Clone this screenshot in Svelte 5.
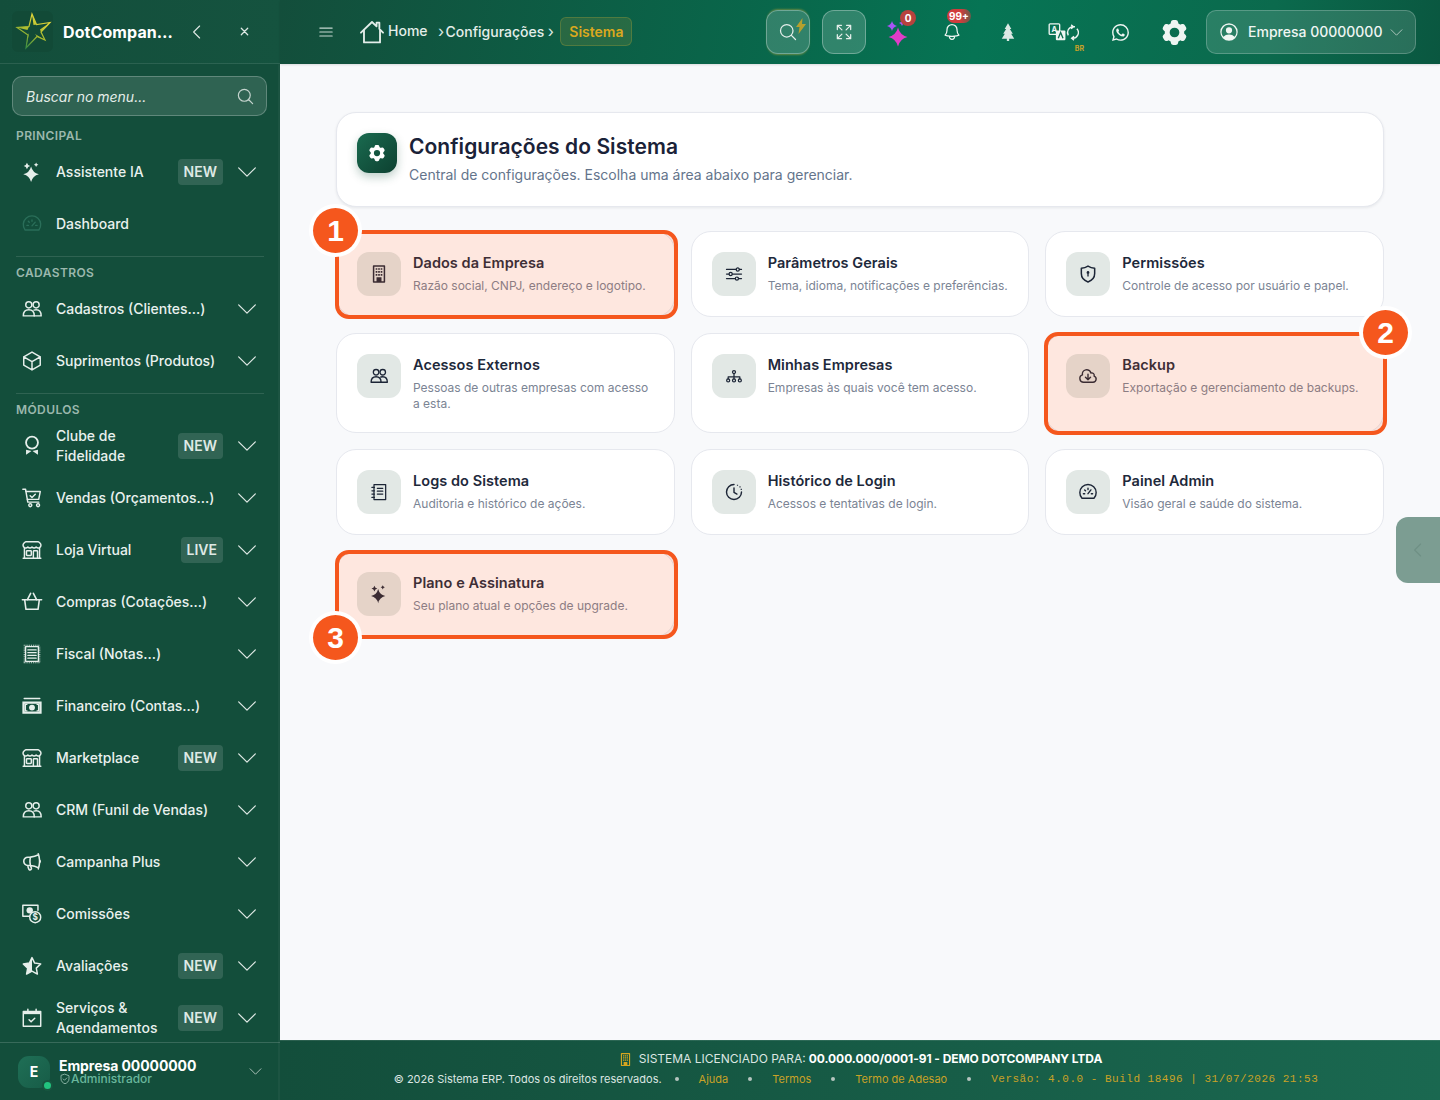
<script>
  const star = (x, y, r) => {
    const k = r * 0.2;
    return `M${x} ${y - r}Q${x + k} ${y - k} ${x + r} ${y}Q${x + k} ${y + k} ${x} ${y + r}Q${x - k} ${y + k} ${x - r} ${y}Q${x - k} ${y - k} ${x} ${y - r}Z`;
  };
  const dots = () => {
    let d = '';
    for (let x = 3; x <= 20; x += 2) d += `M${x} 2h1v1h-1zM${x} 21h1v1h-1z`;
    for (let y = 4; y <= 20; y += 2) d += `M3 ${y}h1v1h-1zM20 ${y}h1v1h-1z`;
    return d;
  };
  const usersS = ['M8.5 4.2a3.3 3.3 0 1 1 0 6.6a3.3 3.3 0 0 1 0-6.6z', 'M16.5 4.2a3.3 3.3 0 1 1 0 6.6a3.3 3.3 0 0 1 0-6.6z', 'M2.5 19.5c0-4.3 2.6-6.6 6-6.6s6 2.3 6 6.6z', 'M14.2 13.2c.7-.2 1.5-.3 2.3-.3c3.4 0 5.5 2.3 5.5 6.6h-7.6'];
  const store = ['M13.5 21v-7.5a.75.75 0 01.75-.75h3a.75.75 0 01.75.75V21m-4.5 0H2.36m11.14 0H18m0 0h3.64m-1.39 0V9.349m-16.5 11.65V9.35m0 0a3.001 3.001 0 003.75-.615A2.993 2.993 0 009.75 9.75c.896 0 1.7-.393 2.25-1.016a2.993 2.993 0 002.25 1.016c.896 0 1.7-.393 2.25-1.016a3.001 3.001 0 003.75.614m-16.5 0a3.004 3.004 0 01-.621-4.72L4.318 3.44A1.5 1.5 0 015.378 3h13.243a1.5 1.5 0 011.06.44l1.19 1.189a3 3 0 01-.621 4.72m-13.5 8.65h3.75a.75.75 0 00.75-.75V13.5a.75.75 0 00-.75-.75H6.75a.75.75 0 00-.75.75v3.75c0 .415.336.75.75.75z'];
  const cog = 'M11.078 2.25c-.917 0-1.699.663-1.85 1.567L9.05 4.889c-.02.12-.115.26-.297.348a7.493 7.493 0 00-.986.57c-.166.115-.334.126-.45.083L6.3 5.508a1.875 1.875 0 00-2.282.819l-.922 1.597a1.875 1.875 0 00.432 2.385l.84.692c.095.078.17.229.154.43a7.598 7.598 0 000 1.139c.015.2-.059.352-.153.43l-.841.692a1.875 1.875 0 00-.432 2.385l.922 1.597a1.875 1.875 0 002.282.818l1.019-.382c.115-.043.283-.031.45.082.312.214.641.405.985.57.182.088.277.228.297.35l.178 1.071c.151.904.933 1.567 1.85 1.567h1.844c.916 0 1.699-.663 1.85-1.567l.178-1.072c.02-.12.114-.26.297-.349.344-.165.673-.356.985-.57.167-.114.335-.125.45-.082l1.02.382a1.875 1.875 0 002.28-.819l.923-1.597a1.875 1.875 0 00-.432-2.385l-.84-.692c-.095-.078-.17-.229-.154-.43a7.614 7.614 0 000-1.139c-.016-.2.059-.352.153-.43l.84-.692c.708-.582.891-1.59.433-2.385l-.922-1.597a1.875 1.875 0 00-2.282-.818l-1.02.382c-.114.043-.282.031-.449-.083a7.49 7.49 0 00-.985-.57c-.183-.087-.277-.227-.297-.348l-.179-1.072a1.875 1.875 0 00-1.85-1.567h-1.843zM12 15.75a3.75 3.75 0 100-7.5 3.75 3.75 0 000 7.5z';
  const I = {
    sparkles: { f: [star(11, 14.5, 8.5), star(6.5, 5.5, 3.5), star(16.5, 4, 2.5)] },
    gauge: { s: ['M4.5 18.5a9.5 9.5 0 1 1 15 0z', 'M12 14l3.5-4', 'M6.5 13.5h1.5M16 13.5h1.5M8 9l1 1M12 7.5v1.5'] },
    users: { s: usersS, w: 1.6 },
    cube: { s: ['M21 7.5l-9-5.25L3 7.5m18 0l-9 5.25m9-5.25v9l-9 5.25M3 7.5l9 5.25M3 7.5v9l9 5.25m0-9v9'], w: 1.6 },
    award: { s: ['M12 1.8a6.5 6.5 0 1 1 0 13a6.5 6.5 0 0 1 0-13z'], f: ['M5.5 16L11.5 17.5L5.5 21.5zM18.5 16L12.5 17.5L18.5 21.5z'], w: 2 },
    cart: { s: ['M2 2.5h3l2.4 14h12', 'M5.5 5h15.5l-1.7 8.5H7', 'M8.5 19.8a1.6 1.6 0 1 1 0 .01zM17 19.8a1.6 1.6 0 1 1 0 .01z', 'M10 9.5l2 2l3.6-3.6'], w: 1.6 },
    store: { s: store, w: 1.6 },
    basket: { s: ['M1.5 9.5h21', 'M4 9.5l1.4 10.5h13.2L20 9.5', 'M7 9.5l3.5-7M17 9.5l-3.5-7'], w: 1.7 },
    receipt: { s: ['M5 4h14v16H5z', 'M7.5 7.5h9M7.5 10.5h9M7.5 13.5h9M7.5 16.5h9'], f: [dots()], w: 1.5 },
    cash: { s: ['M3.5 3.8h17'], f: ['M1.5 7h21v13.5h-21zM4 9.5v8.5h16V9.5z', 'M12 10.5a3.2 3.2 0 1 1 0 6.4a3.2 3.2 0 0 1 0-6.4z', 'M4 9.5h3v1.5H5.5v5.5H7V18H4zM20 9.5h-3v1.5h1.5v5.5H17V18h3z'], w: 1.6 },
    megaphone: { s: ['M10.34 15.84c-.688-.06-1.386-.09-2.09-.09H7.5a4.5 4.5 0 110-9h.75c.704 0 1.402-.03 2.09-.09m0 9.18c.253.962.584 1.892.985 2.783.247.55.06 1.21-.463 1.511l-.657.38c-.551.318-1.26.117-1.527-.461a20.845 20.845 0 01-1.44-4.282m3.102.069a18.03 18.03 0 01-.59-4.59c0-1.586.205-3.124.59-4.59m0 9.18a23.848 23.848 0 018.835 2.535M10.34 6.66a23.847 23.847 0 008.835-2.535m0 0A23.74 23.74 0 0018.795 3m.38 1.125a23.91 23.91 0 011.014 5.395m-1.014 8.855c-.118.38-.245.754-.38 1.125m.38-1.125a23.91 23.91 0 001.014-5.395m0-3.46c.495.413.811 1.035.811 1.73 0 .695-.316 1.317-.811 1.73m0-3.46a24.347 24.347 0 010 3.46'], w: 1.7 },
    comm: { s: ['M9 14.5H2v-12h16.5v5.5', 'M15.5 9.5a6 6 0 1 1 0 12a6 6 0 0 1 0-12z'], f: ['M9.5 4.5a3.5 3.5 0 1 1 0 7a3.5 3.5 0 0 1 0-7z'], t: '$', w: 1.6 },
    starhalf: { s: ['M12 2.8l2.9 6 6.6.9-4.8 4.6 1.2 6.5L12 17.7l-5.9 3.1 1.2-6.5-4.8-4.6 6.6-.9z'], f: ['M12 2.8v14.9l-5.9 3.1 1.2-6.5-4.8-4.6 6.6-.9z'], w: 1.6 },
    calendar: { s: ['M2.5 5h19v16h-19z', 'M7.5 2.5v3M16.5 2.5v3', 'M8.8 14l2.2 2.2l4-4'], f: ['M2.5 5h19v2.8h-19z'], w: 1.6 },
    menu: { s: ['M3.75 6.75h16.5M3.75 12h16.5m-16.5 5.25h16.5'] },
    home: { s: ['M1.8 12.6L12 2.8l4.2 4V3.4h2.6V9.2l3.4 3.4', 'M4.6 10.2V21.6h14.8V10.2'], w: 1.7 },
    search: { s: ['M21 21l-5.2-5.2m2.2-5.3a7.5 7.5 0 1 1-15 0a7.5 7.5 0 0 1 15 0z'] },
    expand: { s: ['M4 9V4h5M4 4l5.5 5.5M20 9V4h-5M20 4l-5.5 5.5M4 15v5h5M4 20l5.5-5.5M20 15v5h-5M20 20l-5.5-5.5'] },
    bell: { s: ['M14.857 17.082a23.848 23.848 0 005.454-1.31A8.967 8.967 0 0118 9.75v-.7V9A6 6 0 006 9v.75a8.967 8.967 0 01-2.312 6.022c1.733.64 3.56 1.085 5.455 1.31m5.714 0a24.255 24.255 0 01-5.714 0m5.714 0a3 3 0 11-5.714 0'] },
    tree: { f: ['M12 1.5l4 7h-1.8l3.6 5.5h-2l3.7 6H13.4v2.8h-2.8V20H4.5l3.7-6h-2l3.6-5.5H8z'] },
    whatsapp: { vb: '0 0 16 16', f: ['M13.601 2.326A7.854 7.854 0 0 0 7.994 0C3.627 0 .068 3.558.064 7.926c0 1.399.366 2.76 1.057 3.965L0 16l4.204-1.102a7.933 7.933 0 0 0 3.79.965h.004c4.368 0 7.926-3.558 7.93-7.93A7.898 7.898 0 0 0 13.6 2.326zM7.994 14.521a6.573 6.573 0 0 1-3.356-.92l-.24-.144-2.494.654.666-2.433-.156-.251a6.56 6.56 0 0 1-1.007-3.505c0-3.626 2.957-6.584 6.591-6.584a6.56 6.56 0 0 1 4.66 1.931 6.557 6.557 0 0 1 1.928 4.66c-.004 3.639-2.961 6.592-6.592 6.592zm3.615-4.934c-.197-.099-1.17-.578-1.353-.646-.182-.065-.315-.099-.445.099-.133.197-.513.646-.627.775-.114.133-.232.148-.43.05-.197-.1-.836-.308-1.592-.985-.59-.525-.985-1.175-1.103-1.372-.114-.198-.011-.304.088-.403.087-.088.197-.232.296-.346.1-.114.133-.198.198-.33.065-.134.034-.248-.015-.347-.05-.099-.445-1.076-.612-1.47-.16-.389-.323-.335-.445-.34-.114-.007-.247-.007-.38-.007a.729.729 0 0 0-.529.247c-.182.198-.691.677-.691 1.654 0 .977.71 1.916.81 2.049.098.133 1.394 2.132 3.383 2.992.47.205.84.326 1.129.418.475.152.904.129 1.246.08.38-.058 1.171-.48 1.338-.943.164-.464.164-.86.114-.943-.049-.084-.182-.133-.38-.232z'] },
    cog: { f: [cog] },
    usercircle: { f: ['M12 2.5a9.5 9.5 0 1 1 0 19a9.5 9.5 0 0 1 0-19zM12 4a8 8 0 0 0-6.1 13.18A8.5 8.5 0 0 1 12 14.8a8.5 8.5 0 0 1 6.1 2.38A8 8 0 0 0 12 4zM12 6.8a3.4 3.4 0 1 1 0 6.8a3.4 3.4 0 0 1 0-6.8z'] },
    chevdown: { s: ['M2 7l10 10l10-10'] },
    chevleft: { s: ['M15.5 4l-8 8l8 8'] },
    close: { s: ['M5 5l14 14M19 5L5 19'], w: 2.8 },
    shield: { s: ['M12 2.5l8 3v6c0 5-3.4 8.4-8 10c-4.6-1.6-8-5-8-10v-6z', 'M8.5 12l2.5 2.5l4.5-4.5'] },
    building: { s: ['M5.5 2.5h13v19h-13z'], f: ['M8 5h2v2H8zM11 5h2v2h-2zM14 5h2v2h-2zM8 8.5h2v2H8zM11 8.5h2v2h-2zM14 8.5h2v2h-2zM8 12h2v2H8zM11 12h2v2h-2zM14 12h2v2h-2zM9 16h6v5.5H9z'], w: 1.8 },
    sliders: { s: ['M3 6.5h11.5M18.5 6.5H21M3 12h3M10 12h11M3 17.5h10.5M17.5 17.5H21', 'M16.5 4.7a1.9 1.9 0 1 1 0 3.8a1.9 1.9 0 0 1 0-3.8zM8 10.1a1.9 1.9 0 1 1 0 3.8a1.9 1.9 0 0 1 0-3.8zM15.5 15.6a1.9 1.9 0 1 1 0 3.8a1.9 1.9 0 0 1 0-3.8z'] },
    shieldkey: { s: ['M12 2.5c2.5 1.6 5 2.4 8 2.6v6.4c0 5-3.3 8.4-8 10c-4.7-1.6-8-5-8-10V5.1c3-.2 5.5-1 8-2.6z'], f: ['M12 8.5a1.7 1.7 0 0 1 .8 3.2V15h-1.6v-3.3A1.7 1.7 0 0 1 12 8.5z'], w: 1.8 },
    org: { s: ['M12 5.5a1.8 1.8 0 1 1 0 3.6a1.8 1.8 0 0 1 0-3.6z', 'M12 9v4M5 15.5V13h14v2.5M12 13v2.5', 'M5 15.5a1.8 1.8 0 1 1 0 3.6a1.8 1.8 0 0 1 0-3.6zM12 15.5a1.8 1.8 0 1 1 0 3.6a1.8 1.8 0 0 1 0-3.6zM19 15.5a1.8 1.8 0 1 1 0 3.6a1.8 1.8 0 0 1 0-3.6z'] },
    cloud: { s: ['M12 9.75v6.75m0 0l-3-3m3 3l3-3m-8.25 6a4.5 4.5 0 01-1.41-8.775 5.25 5.25 0 0110.233-2.33 3 3 0 013.758 3.848A3.752 3.752 0 0118 19.5H6.75z'], w: 1.7 },
    logs: { s: ['M6 3h14v18H6z', 'M10 7.5h6.5M10 11h6.5M10 14.5h6.5M3.5 6.5h3M3.5 10.5h3M3.5 14.5h3M3.5 18.5h3'] },
    clock: { s: ['M12 3a9 9 0 1 0 9 9', 'M12 7v5.5l3.5 2'], f: ['M15.5 3.2h1.4v1.4h-1.4zM18.5 5.2h1.4v1.4h-1.4zM20 8.2h1.4v1.4H20z'], w: 1.7 },
    speed: { s: ['M4.8 19.5a9.8 9.8 0 1 1 14.4 0z', 'M12 14l3.5-4.5', 'M6.5 14h1.5M16 14h1.5M8 9.5l1 1M12 7.5V9'], w: 1.7 }
  };

  const badgeNew = 'NEW';
  const sections = [
    { label: 'PRINCIPAL', items: [
      { t: 'Assistente IA', i: 'sparkles', b: badgeNew, c: true },
      { t: 'Dashboard', i: 'gauge', dim: true }
    ]},
    { label: 'CADASTROS', items: [
      { t: 'Cadastros (Clientes...)', i: 'users', c: true },
      { t: 'Suprimentos (Produtos)', i: 'cube', c: true }
    ]},
    { label: 'MÓDULOS', items: [
      { t: 'Clube de Fidelidade', i: 'award', b: badgeNew, c: true },
      { t: 'Vendas (Orçamentos...)', i: 'cart', c: true },
      { t: 'Loja Virtual', i: 'store', b: 'LIVE', c: true },
      { t: 'Compras (Cotações...)', i: 'basket', c: true },
      { t: 'Fiscal (Notas...)', i: 'receipt', c: true },
      { t: 'Financeiro (Contas...)', i: 'cash', c: true },
      { t: 'Marketplace', i: 'store', b: badgeNew, c: true },
      { t: 'CRM (Funil de Vendas)', i: 'users', c: true },
      { t: 'Campanha Plus', i: 'megaphone', c: true },
      { t: 'Comissões', i: 'comm', c: true },
      { t: 'Avaliações', i: 'starhalf', b: badgeNew, c: true },
      { t: 'Serviços & Agendamentos', i: 'calendar', b: badgeNew, c: true }
    ]}
  ];

  const cards = [
    { t: 'Dados da Empresa', d: 'Razão social, CNPJ, endereço e logotipo.', i: 'building', n: 1 },
    { t: 'Parâmetros Gerais', d: 'Tema, idioma, notificações e preferências.', i: 'sliders' },
    { t: 'Permissões', d: 'Controle de acesso por usuário e papel.', i: 'shieldkey' },
    { t: 'Acessos Externos', d: 'Pessoas de outras empresas com acesso a esta.', i: 'users' },
    { t: 'Minhas Empresas', d: 'Empresas às quais você tem acesso.', i: 'org' },
    { t: 'Backup', d: 'Exportação e gerenciamento de backups.', i: 'cloud', n: 2 },
    { t: 'Logs do Sistema', d: 'Auditoria e histórico de ações.', i: 'logs' },
    { t: 'Histórico de Login', d: 'Acessos e tentativas de login.', i: 'clock' },
    { t: 'Painel Admin', d: 'Visão geral e saúde do sistema.', i: 'speed' },
    { t: 'Plano e Assinatura', d: 'Seu plano atual e opções de upgrade.', i: 'sparkles', n: 3 }
  ];
</script>

{#snippet ic(name, size = 22)}
  <svg width={size} height={size} viewBox={I[name].vb ?? '0 0 24 24'} fill="none" stroke="currentColor" stroke-width={I[name].w ?? 1.5} stroke-linecap="round" stroke-linejoin="round" aria-hidden="true">
    {#each I[name].s ?? [] as d}<path {d} />{/each}
    {#each I[name].f ?? [] as d}<path {d} fill="currentColor" stroke="none" fill-rule="evenodd" />{/each}
    {#if I[name].t}<text x="15.5" y="19" font-size="9" font-weight="700" text-anchor="middle" fill="currentColor" stroke="none" font-family="Inter, sans-serif">{I[name].t}</text>{/if}
  </svg>
{/snippet}

<div class="app">
  <aside class="side">
    <div class="brand">
      <div class="logo">
        <svg width="40" height="40" viewBox="0 0 40 40" aria-hidden="true">
          <defs>
            <linearGradient id="lg" x1="0.7" y1="0" x2="0.2" y2="1">
              <stop offset="0" stop-color="#e9d83a" />
              <stop offset="0.55" stop-color="#a9bb2f" />
              <stop offset="1" stop-color="#2f8a45" />
            </linearGradient>
          </defs>
          <path d="M19 2L23.5 12.5L37 10.5L28 20L32 28L24 24.5L13 36L15 23L4 15.5L16 14.5Z" fill="none" stroke="url(#lg)" stroke-width="1.2" stroke-linejoin="miter" />
          <path d="M19 2L20.5 13L23.5 12.5zM37 10.5L27 17.5L28 20zM32 28L22 22L24 24.5zM13 36L16 21L15 23zM4 15.5L14.5 18L16 14.5z" fill="url(#lg)" />
        </svg>
      </div>
      <span class="brand-name">DotCompan…</span>
      <span class="brand-btn">{@render ic('chevleft', 18)}</span>
      <span class="brand-x">{@render ic('close', 11)}</span>
    </div>

    <div class="menu-search">
      <span>Buscar no menu...</span>
      {@render ic('search', 19)}
    </div>

    <nav class="nav">
      {#each sections as s, si}
        {#if si > 0}<div class="nav-div"></div>{/if}
        <div class="nav-label">{s.label}</div>
        {#each s.items as it}
          <div class="row">
            <span class="row-ic" class:dim={it.dim}>{@render ic(it.i, 22)}</span>
            <span class="row-t">{it.t}</span>
            {#if it.b}<span class="tag">{it.b}</span>{/if}
            {#if it.c}<span class="row-c">{@render ic('chevdown', 20)}</span>{/if}
          </div>
        {/each}
      {/each}
    </nav>

    <div class="me">
      <div class="avatar">E<i></i></div>
      <div class="me-txt">
        <div class="me-name">Empresa 00000000</div>
        <div class="me-role">{@render ic('shield', 12)}<span>Administrador</span></div>
      </div>
      <span class="me-c">{@render ic('chevdown', 13)}</span>
    </div>
  </aside>

  <div class="body">
    <header class="top">
      <span class="burger">{@render ic('menu', 18)}</span>
      <div class="crumbs">
        <span class="crumb-home">{@render ic('home', 26)}<b>Home</b></span>
        <span class="sep first">›</span>
        <b class="crumb">Configurações</b>
        <span class="sep">›</span>
        <span class="chip">Sistema</span>
      </div>
      <div class="tools">
        <span class="tbtn glow">
          {@render ic('search', 20)}
          <svg class="bolt" width="10" height="16" viewBox="0 0 10 16" aria-hidden="true"><path d="M6.5 0L0 9h3.5L2.5 16L10 6H6z" /></svg>
        </span>
        <span class="tbtn second">{@render ic('expand', 20)}</span>
        <span class="slot">
          <svg width="26" height="30" viewBox="0 0 26 30" aria-hidden="true">
            <path d={star(7, 9, 5)} fill="#a855f7" />
            <path d={star(17, 6, 3)} fill="#a855f7" />
            <path d={star(13, 20, 9.5)} fill="#e03cc8" />
          </svg>
          <em class="cnt zero">0</em>
        </span>
        <span class="slot">{@render ic('bell', 20)}<em class="cnt many">99+</em></span>
        <span class="slot tree">{@render ic('tree', 20)}</span>
        <span class="slot wide">
          <svg width="31" height="21" viewBox="0 0 32 22" fill="none" stroke="currentColor" stroke-width="1.4" aria-hidden="true">
            <rect x="1" y="2" width="11" height="11" rx="1" />
            <text x="6.5" y="10.5" font-size="8" font-weight="700" text-anchor="middle" fill="currentColor" stroke="none" font-family="Inter, sans-serif">A</text>
            <rect x="8" y="9" width="10" height="10" rx="1" fill="currentColor" stroke="none" />
            <path d="M10.5 17l2.5-6l2.5 6" stroke="#0a6a4d" />
            <path d="M21 14a6 6 0 0 1 5-9l2 0M24 3l2.5 2L24 7" />
            <path d="M30 7a6 6 0 0 1-5 10M27 19l-2.5-2L27 15" />
          </svg>
          <em class="br">BR</em>
        </span>
        <span class="slot">{@render ic('whatsapp', 17)}</span>
        <span class="slot">{@render ic('cog', 31)}</span>
        <span class="account">
          {@render ic('usercircle', 22)}
          <span class="acc-name">Empresa 00000000</span>
          <span class="acc-c">{@render ic('chevdown', 13)}</span>
        </span>
      </div>
    </header>

    <main class="main">
      <section class="head">
        <div class="head-ic">{@render ic('cog', 20)}</div>
        <div>
          <h1>Configurações do Sistema</h1>
          <p>Central de configurações. Escolha uma área abaixo para gerenciar.</p>
        </div>
      </section>

      <div class="grid">
        {#each cards as c}
          <article class="card">
            <div class="card-ic">{@render ic(c.i, 20)}</div>
            <div class="card-txt">
              <h2>{c.t}</h2>
              <p>{c.d}</p>
            </div>
            {#if c.n}
              <div class="mark"></div>
              <div class="num n{c.n}">{c.n}</div>
            {/if}
          </article>
        {/each}
      </div>

      <div class="pull">{@render ic('chevleft', 18)}</div>
    </main>

    <footer class="foot">
      <div class="foot-a">
        <span class="foot-ic">{@render ic('building', 15)}</span>
        <span>SISTEMA LICENCIADO PARA:</span>
        <b>00.000.000/0001-91 - DEMO DOTCOMPANY LTDA</b>
      </div>
      <div class="foot-b">
        <span>© 2026 Sistema ERP. Todos os direitos reservados.</span>
        <i class="first"></i><span class="gold">Ajuda</span>
        <i></i><span class="gold">Termos</span>
        <i></i><span class="gold">Termo de Adesao</span>
        <i></i><span class="gold mono">Versão: 4.0.0 - Build 18496 | 31/07/2026 21:53</span>
      </div>
    </footer>
  </div>
</div>

<style>
  :global(body) {
    margin: 0;
    background: #f8f9fb;
    font-family: Inter, "Liberation Sans", sans-serif;
  }
  svg { display: block; flex: none; }
  .app {
    display: grid;
    grid-template-columns: 280px 1fr;
    height: 1100px;
    overflow: hidden;
  }

  /* sidebar */
  .side {
    display: flex;
    flex-direction: column;
    min-height: 0;
    background: #134e3b;
    color: #e9f1ee;
    box-shadow: inset -2px 0 0 rgba(255, 255, 255, .04);
  }
  .brand {
    height: 63px;
    flex: none;
    display: flex;
    align-items: center;
    padding-left: 12px;
    border-bottom: 1px solid rgba(255, 255, 255, .1);
    background: linear-gradient(90deg, #134e3b, #15533f);
  }
  .logo {
    width: 41px;
    height: 41px;
    display: flex;
    align-items: center;
    justify-content: center;
    background: #124a37;
    border-radius: 6px;
    margin-right: 10px;
  }
  .brand-name {
    width: 120px;
    font-size: 16px;
    font-weight: 700;
    color: #fff;
    white-space: nowrap;
    letter-spacing: .1px;
  }
  .brand-btn { margin-left: 5px; color: #dde8e4; }
  .brand-x { margin-left: 33px; color: #dde8e4; }
  .menu-search {
    flex: none;
    height: 38px;
    margin: 12px 13px 4px 12px;
    padding: 0 11px 0 13px;
    display: flex;
    align-items: center;
    justify-content: space-between;
    background: rgba(255, 255, 255, .12);
    border: 1px solid rgba(255, 255, 255, .24);
    border-radius: 10px;
    font-style: italic;
    font-size: 14px;
    color: #e4ede9;
  }
  .menu-search svg { color: #c5d4ce; }
  .nav {
    flex: 1;
    min-height: 0;
    overflow: hidden;
    margin-bottom: 8px;
  }
  .nav-div {
    height: 1px;
    margin: 6px 16px 0;
    background: rgba(255, 255, 255, .12);
  }
  .nav-label {
    padding: 7px 16px 1px;
    line-height: 18px;
    font-size: 12px;
    font-weight: 600;
    letter-spacing: .4px;
    color: #9bb8ad;
  }
  .row {
    height: 52px;
    display: flex;
    align-items: center;
    padding: 0 23px 0 21px;
    font-size: 14px;
    font-weight: 500;
    line-height: 20px;
  }
  .row-ic { width: 22px; margin-right: 13px; flex: none; color: #e6efeb; }
  .row-ic.dim { color: #2a6e59; }
  .row-t { flex: 1; min-width: 0; }
  .tag {
    flex: none;
    height: 26px;
    padding: 0 6px;
    margin-left: 4px;
    display: flex;
    align-items: center;
    background: rgba(255, 255, 255, .13);
    border-radius: 4px;
    font-size: 14px;
    font-weight: 600;
    color: #dfe9e5;
  }
  .row-c { flex: none; margin-left: 14px; width: 20px; color: #dfe9e5; }
  .me {
    flex: none;
    height: 57px;
    display: flex;
    align-items: center;
    padding: 0 18px;
    border-top: 1px solid rgba(255, 255, 255, .16);
  }
  .avatar {
    position: relative;
    flex: none;
    width: 32px;
    height: 32px;
    display: flex;
    align-items: center;
    justify-content: center;
    border-radius: 11px;
    background: linear-gradient(135deg, #1f6f56, #175c47);
    font-size: 14px;
    font-weight: 700;
    color: #fff;
  }
  .avatar i {
    position: absolute;
    right: -1px;
    bottom: -1px;
    width: 7px;
    height: 7px;
    border-radius: 50%;
    background: #22c37f;
    box-shadow: 0 0 0 2px #17553f;
  }
  .me-txt { flex: 1; margin-left: 9px; }
  .me-name {
    font-size: 14px;
    font-weight: 700;
    line-height: 15px;
    color: #fff;
    letter-spacing: -.08px;
  }
  .me-role {
    display: flex;
    align-items: center;
    font-size: 12px;
    font-weight: 500;
    line-height: 12px;
    color: #69b79c;
  }
  .me-role svg { color: #a9cfc1; }
  .me-c { color: #c9d8d2; margin-right: 0; }

  /* top bar */
  .body {
    display: flex;
    flex-direction: column;
    min-width: 0;
    min-height: 0;
  }
  .top {
    flex: none;
    height: 64px;
    display: flex;
    align-items: center;
    box-sizing: border-box;
    padding: 0 24px 0 37px;
    background: linear-gradient(100deg, #134e3b 0%, #08694c 45%, #067454 60%, #0b6a4d 85%, #0a5740 100%);
    color: #e4eeea;
    box-shadow: 0 1px 2px rgba(0, 0, 0, .12);
    z-index: 1;
  }
  .burger { color: #c6d8d1; margin-right: 25px; }
  .crumbs {
    flex: 1;
    display: flex;
    align-items: center;
    margin-top: -1px;
    font-size: 14px;
    color: #e4eeea;
  }
  .crumbs b { font-weight: 500; }
  .crumb-home { display: flex; align-items: center; gap: 3px; }
  .crumb-home b { margin-top: -2px; }
  .crumb-home svg { margin-left: -1px; }
  .sep { width: 9px; text-align: center; font-size: 16px; color: #dbe8e3; margin-top: -2px; }
  .sep.first { margin-left: 9px; }
  .crumb { margin-right: 2px; }
  .chip {
    margin-left: 5px;
    height: 29px;
    box-sizing: border-box;
    padding: 0 8px;
    display: flex;
    align-items: center;
    background: rgba(212, 175, 55, .14);
    border: 1px solid rgba(212, 175, 55, .24);
    border-radius: 6px;
    font-weight: 600;
    color: #dba81e;
  }
  .tools { display: flex; align-items: center; gap: 10px; }
  .tbtn {
    position: relative;
    width: 44px;
    height: 44px;
    box-sizing: border-box;
    display: flex;
    align-items: center;
    justify-content: center;
    background: rgba(255, 255, 255, .17);
    border: 1px solid rgba(255, 255, 255, .3);
    border-radius: 12px;
  }
  .tbtn.second { margin-left: 2px; }
  .tbtn.glow { box-shadow: 0 -2px 2px -1px rgba(212, 175, 55, .45), 0 2px 2px -1px rgba(212, 175, 55, .45); }
  .bolt { position: absolute; top: 7px; right: 3px; fill: #b5a02e; }
  .slot {
    position: relative;
    width: 44px;
    height: 44px;
    display: flex;
    align-items: center;
    justify-content: center;
    color: #eef5f2;
  }
  .slot.wide { width: 50px; }
  .slot.tree svg { margin-left: 4px; color: #dbe9e4; }
  .cnt {
    position: absolute;
    font-style: normal;
    font-weight: 700;
    font-size: 10px;
    line-height: 14px;
    color: #fff;
    text-align: center;
    border-radius: 8px;
  }
  .zero { top: 0; left: 24px; width: 16px; height: 16px; line-height: 16px; background: #b7423e; border-radius: 50%; }
  .many { top: -1px; left: 17px; width: 24px; height: 14px; background: linear-gradient(90deg, #d23c3c 55%, rgba(150, 80, 70, .7)); }
  .br {
    position: absolute;
    bottom: 1px;
    right: 4px;
    font-style: normal;
    font-size: 7px;
    font-weight: 700;
    color: #c9a227;
  }
  .account {
    width: 210px;
    box-sizing: border-box;
    height: 44px;
    display: flex;
    align-items: center;
    padding: 0 12px 0 11px;
    gap: 8px;
    background: rgba(255, 255, 255, .13);
    border: 1px solid rgba(255, 255, 255, .22);
    border-radius: 10px;
    font-size: 14px;
    font-weight: 500;
    color: #f0f6f3;
  }
  .acc-name { white-space: nowrap; margin-top: -1px; }
  .acc-c { margin-left: auto; color: #c5d6cf; }

  /* content */
  .main {
    position: relative;
    flex: 1;
    min-height: 0;
    box-sizing: border-box;
    padding: 48px 56px 0;
    background: #f8f9fb;
  }
  .head {
    display: flex;
    gap: 12px;
    box-sizing: border-box;
    height: 95px;
    padding: 20px;
    margin-bottom: 24px;
    background: #fff;
    border: 1px solid #e6e8ee;
    border-radius: 20px;
    box-shadow: 0 1px 3px rgba(15, 23, 42, .08);
  }
  .head-ic {
    flex: none;
    width: 40px;
    height: 40px;
    display: flex;
    align-items: center;
    justify-content: center;
    border-radius: 12px;
    color: #fff;
    background: linear-gradient(135deg, #1a6b50, #0d4030);
    box-shadow: 0 4px 10px rgba(19, 78, 59, .28);
  }
  h1 {
    margin: 0 0 4px;
    font-size: 21px;
    line-height: 28px;
    font-weight: 600;
    color: #1a2238;
    letter-spacing: .05px;
  }
  .head p {
    margin: 0;
    font-size: 14px;
    line-height: 20px;
    color: #64748b;
  }
  .grid {
    display: grid;
    grid-template-columns: repeat(3, 1fr);
    gap: 16px;
  }
  .card {
    position: relative;
    display: flex;
    gap: 12px;
    padding: 20px;
    background: #fff;
    border: 1px solid #e6e8ee;
    border-radius: 20px;
  }
  .card-ic {
    flex: none;
    width: 44px;
    height: 44px;
    display: flex;
    align-items: center;
    justify-content: center;
    border-radius: 12px;
    background: #e2e8e5;
    color: #1c2536;
  }
  h2 {
    margin: 0 0 4px;
    font-size: 14.5px;
    line-height: 22px;
    font-weight: 600;
    color: #1e293b;
    letter-spacing: .05px;
  }
  .card p {
    margin: 0;
    font-size: 12px;
    line-height: 16px;
    color: #7b8494;
  }
  .mark {
    position: absolute;
    top: -2px;
    left: -2px;
    right: -4px;
    bottom: -3px;
    box-sizing: border-box;
    border: 4px solid #f5571d;
    border-radius: 14px;
    background: rgba(245, 87, 29, .14);
    z-index: 2;
  }
  .num {
    position: absolute;
    width: 45px;
    height: 45px;
    display: flex;
    align-items: center;
    justify-content: center;
    border-radius: 50%;
    background: #f5571d;
    box-shadow: 0 0 0 4px #fff;
    color: #fff;
    font: 700 30px "Liberation Sans", Arial, sans-serif;
    z-index: 3;
  }
  .n1 { top: -24px; left: -24px; }
  .n2 { top: -24px; right: -25px; }
  .n3 { bottom: -24px; left: -24px; }
  .pull {
    position: absolute;
    top: 453px;
    right: 0;
    width: 44px;
    height: 66px;
    display: flex;
    align-items: center;
    padding-left: 13px;
    box-sizing: border-box;
    background: #7c9d92;
    color: #6f9085;
    border-radius: 12px 0 0 12px;
  }

  /* footer */
  .foot {
    flex: none;
    height: 60px;
    box-sizing: border-box;
    padding-top: 10px;
    background: linear-gradient(90deg, #134e3b, #1a6850);
    border-top: 1px solid rgba(255, 255, 255, .1);
    color: #dce6e2;
  }
  .foot-a {
    display: flex;
    align-items: center;
    justify-content: center;
    gap: 3px;
    font-size: 12px;
    line-height: 16px;
  }
  .foot-a b { font-weight: 700; color: #fff; letter-spacing: -.07px; }
  .foot-ic { color: #d4a520; margin-right: 3px; }
  .foot-b {
    display: flex;
    align-items: center;
    justify-content: center;
    gap: 15px;
    margin-top: 4px;
    padding-right: 8px;
    font-size: 11px;
    line-height: 16px;
  }
  .foot-b i {
    width: 4px;
    height: 4px;
    margin: 0 5px;
    border-radius: 50%;
    background: #b6c6c0;
  }
  .foot-b i.first { margin-left: -2px; }
  .gold { color: #c9a227; }
  .mono {
    font-family: "Liberation Mono", monospace;
    letter-spacing: .51px;
  }
</style>
